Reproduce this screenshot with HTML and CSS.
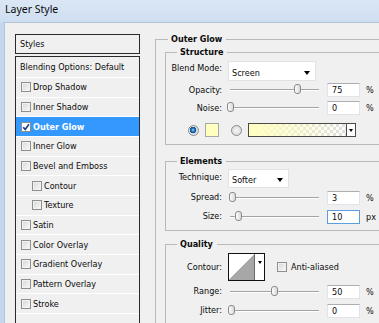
FILE: index.html
```html
<!DOCTYPE html>
<html lang="en">
<head>
    <meta charset="UTF-8">
    <meta name="viewport" content="width=device-width, initial-scale=1.0">
    <title>Layer Style</title>
    <link rel="stylesheet" href="styles.css">
</head>
<body>
    <div class="window">
        <div class="titlebar">Layer Style</div>
        <div class="client">
            <div class="styles-panel">
                <div class="panel-head">Styles</div>
                <ul class="style-list">
                    <li class="blending">Blending Options: Default</li>
                    <li><span class="check"></span>Drop Shadow</li>
                    <li><span class="check"></span>Inner Shadow</li>
                    <li class="selected">
                        <span class="check"><svg viewBox="0 0 8 8" width="8" height="8"><path d="M1.2 4.2 L3.2 6.4 L6.9 1.2"/></svg></span>Outer Glow
                    </li>
                    <li><span class="check"></span>Inner Glow</li>
                    <li><span class="check"></span>Bevel and Emboss</li>
                    <li class="indent"><span class="check"></span>Contour</li>
                    <li class="indent"><span class="check"></span>Texture</li>
                    <li><span class="check"></span>Satin</li>
                    <li><span class="check"></span>Color Overlay</li>
                    <li><span class="check"></span>Gradient Overlay</li>
                    <li><span class="check"></span>Pattern Overlay</li>
                    <li><span class="check"></span>Stroke</li>
                    <li></li>
                </ul>
            </div>

            <div class="options">
                <fieldset class="outer">
                    <legend>Outer Glow</legend>

                    <fieldset class="group structure">
                        <legend>Structure</legend>
                        <div class="row select-row">
                            <label class="lbl">Blend Mode:</label>
                            <div class="select blend"><span>Screen</span><span class="arrow"></span></div>
                        </div>
                        <div class="row slider-row short">
                            <label class="lbl">Opacity:</label>
                            <div class="slider"><span class="thumb" style="left: 75%"></span></div>
                            <div class="num">75</div>
                            <span class="unit">%</span>
                        </div>
                        <div class="row slider-row short">
                            <label class="lbl">Noise:</label>
                            <div class="slider"><span class="thumb" style="left: 0%"></span></div>
                            <div class="num">0</div>
                            <span class="unit">%</span>
                        </div>
                        <div class="row color-row">
                            <span class="radio on"></span>
                            <span class="swatch"></span>
                            <span class="radio"></span>
                            <div class="gradient">
                                <span class="fill"></span>
                                <span class="drop"><span class="arrow"></span></span>
                            </div>
                        </div>
                    </fieldset>

                    <fieldset class="group elements">
                        <legend>Elements</legend>
                        <div class="row select-row">
                            <label class="lbl">Technique:</label>
                            <div class="select technique"><span>Softer</span><span class="arrow"></span></div>
                        </div>
                        <div class="row slider-row">
                            <label class="lbl">Spread:</label>
                            <div class="slider"><span class="thumb" style="left: 2%"></span></div>
                            <div class="num">3</div>
                            <span class="unit">%</span>
                        </div>
                        <div class="row slider-row">
                            <label class="lbl">Size:</label>
                            <div class="slider"><span class="thumb" style="left: 9%"></span></div>
                            <div class="num focus">10</div>
                            <span class="unit">px</span>
                        </div>
                    </fieldset>

                    <fieldset class="group quality">
                        <legend>Quality</legend>
                        <div class="row contour-row">
                            <label class="lbl">Contour:</label>
                            <div class="contour">
                                <span class="curve"></span>
                                <span class="drop"><span class="arrow"></span></span>
                            </div>
                            <span class="check"></span>
                            <span class="check-label">Anti-aliased</span>
                        </div>
                        <div class="row slider-row range">
                            <label class="lbl">Range:</label>
                            <div class="slider"><span class="thumb" style="left: 49%"></span></div>
                            <div class="num">50</div>
                            <span class="unit">%</span>
                        </div>
                        <div class="row slider-row">
                            <label class="lbl">Jitter:</label>
                            <div class="slider"><span class="thumb" style="left: 1%"></span></div>
                            <div class="num">0</div>
                            <span class="unit">%</span>
                        </div>
                    </fieldset>
                </fieldset>
            </div>
        </div>
    </div>
</body>
</html>
```

FILE: styles.css
```css
* {
    box-sizing: border-box;
}

body {
    margin: 0;
    background: #c4d7ef;
    overflow: hidden;
    font-family: "DejaVu Sans Condensed", "DejaVu Sans", sans-serif;
    font-size: 9px;
    color: #0a0a0a;
}

.window {
    width: 100%;
    height: 100vh;
    display: flex;
    flex-direction: column;
    overflow: hidden;
}

.titlebar {
    height: 22px;
    flex: none;
    padding-left: 5px;
    line-height: 18px;
    font-family: "Noto Sans", sans-serif;
    font-size: 10.5px;
    color: #0a0a0a;
    background: linear-gradient(#dbe7f5, #cedef1);
}

.client {
    flex: 1;
    min-height: 0;
    display: flex;
    align-items: stretch;
    margin-left: 4px;
    padding: 11px 0 0 10px;
    overflow: hidden;
    background: #f0f0f0;
    border-top: 1px solid #b3c3d8;
    border-left: 1px solid #b3c3d8;
}

/* left list of styles */
.styles-panel {
    width: 125px;
    flex: none;
    display: flex;
    flex-direction: column;
}

.panel-head {
    height: 20px;
    flex: none;
    padding-left: 4px;
    line-height: 18px;
    border: 1px solid #2a2a2a;
}

.style-list {
    flex: 1;
    list-style: none;
    margin: 2px 0 0;
    padding: 0;
    overflow: hidden;
    border: 1px solid #2a2a2a;
    border-bottom: none;
}

.style-list li {
    height: 19.67px;
    display: flex;
    align-items: center;
    padding-left: 5px;
    border-bottom: 1px solid #ffffff;
}

.style-list li.blending {
    height: 21px;
    padding-left: 4px;
}

.style-list li.indent {
    padding-left: 16px;
}

.style-list li.selected {
    background: #3399ff;
    color: #ffffff;
    font-weight: bold;
}

.check {
    width: 10px;
    height: 10px;
    flex: none;
    margin-right: 2px;
    border: 1px solid #8e8f8f;
    background: linear-gradient(135deg, #d6d6d6, #fbfbfb);
    box-shadow: inset 0 0 0 1px #f2f2f2;
}

.selected .check {
    background: #ffffff;
    box-shadow: none;
}

.check svg {
    display: block;
}

.check path {
    fill: none;
    stroke: #1f3a8a;
    stroke-width: 1.6;
}

/* right options */
.options {
    flex: 1;
    min-width: 0;
    margin-left: 15px;
    display: flex;
    flex-direction: column;
}

fieldset {
    margin: 0;
    padding: 0;
    min-width: 0;
    border: 1px solid #b9b9b9;
    border-right: none;
}

legend {
    padding: 0 4px 0 3px;
    font-weight: bold;
    line-height: 11px;
}

.outer {
    flex: 1;
    padding-left: 9px;
    border-bottom: none;
}

.outer > legend {
    margin-left: 3px;
}

.group > legend {
    margin-left: 11px;
}

.structure {
    margin-top: 2px;
    padding-bottom: 7px;
}

.elements {
    margin-top: 11px;
    padding-bottom: 4px;
}

.quality {
    margin-top: 8px;
    padding-bottom: 20px;
    border-bottom: none;
}

.row {
    display: flex;
    align-items: center;
}

.lbl {
    width: 57px;
    flex: none;
    padding-right: 1px;
    text-align: right;
    line-height: 11px;
}

.select-row {
    align-items: flex-start;
}

.structure .select-row {
    margin-top: 3px;
}

.structure .select-row .lbl {
    margin-top: 2px;
}

.elements .select-row {
    margin-top: 2px;
}

.elements .select-row .lbl {
    margin-top: 3px;
}

.select {
    margin-left: 5px;
    display: flex;
    align-items: center;
    justify-content: space-between;
    padding: 3px 5px 0 3px;
    background: #ffffff;
    border: 1px solid #e2e2e2;
}

.select.blend {
    width: 88px;
    height: 20px;
    padding-top: 4px;
}

.select.technique {
    width: 61px;
    height: 19px;
}

.arrow {
    width: 0;
    height: 0;
    border-left: 3px solid transparent;
    border-right: 3px solid transparent;
    border-top: 4px solid #000000;
}

.slider-row {
    height: 19px;
}

.slider-row.short {
    height: 18px;
}

.structure .slider-row.short:first-of-type {
    margin-top: 1px;
}

.slider-row.range {
    margin-top: 1px;
}

.slider {
    position: relative;
    width: 89px;
    height: 2px;
    margin-left: 7px;
    border-top: 1px solid #a3a3a3;
    border-bottom: 1px solid #ffffff;
}

.thumb {
    position: absolute;
    top: -6px;
    width: 7px;
    height: 10px;
    margin-left: -3px;
    border: 1px solid #8a8a8a;
    border-radius: 3px;
    background: linear-gradient(90deg, #fdfdfd, #d9d9d9);
}

.num {
    width: 33px;
    height: 14px;
    margin-left: 8px;
    padding-left: 4px;
    line-height: 12px;
    background: #ffffff;
    border: 1px solid #e2e3ea;
    border-top-color: #abadb3;
}

.num.focus {
    border-color: #5c9fdf;
}

.unit {
    margin-left: 6px;
}

.color-row {
    margin-top: 6px;
    height: 14px;
    padding-left: 22px;
}

.radio {
    width: 11px;
    height: 11px;
    flex: none;
    border-radius: 50%;
    border: 1px solid #8b8b8b;
    background: radial-gradient(circle, #f4f4f4 0, #d4d4d4 100%);
}

.radio.on {
    background: radial-gradient(circle at 45% 45%, #9ad6ff 0, #2a83c9 1.5px, #0f4d86 3px, #e8e8e8 3.6px, #d0d0d0 100%);
}

.swatch {
    width: 14px;
    height: 14px;
    margin-left: 6px;
    background: #ffffc0;
    border: 1px solid #a8a8a8;
}

.color-row .swatch + .radio {
    margin-left: 12px;
}

.color-row .radio + .gradient {
    margin-left: 6px;
}

.gradient {
    width: 108px;
    height: 14px;
    display: flex;
    border: 1px solid #4a4a4a;
}

.gradient .fill {
    flex: 1;
    background:
        linear-gradient(90deg, #ffffc0, rgba(255, 255, 192, 0)),
        repeating-conic-gradient(#dedede 0 25%, #ffffff 0 50%) 0 0 / 6px 6px;
}

.drop {
    width: 9px;
    display: flex;
    justify-content: center;
    background: #ffffff;
    border-left: 1px solid #4a4a4a;
}

.gradient .drop {
    align-items: center;
}

.gradient .drop .arrow,
.contour .drop .arrow {
    border-left-width: 2.5px;
    border-right-width: 2.5px;
    border-top-width: 3px;
}

.contour-row {
    margin-top: 3px;
}

.contour {
    width: 37px;
    height: 28px;
    margin-left: 5px;
    display: flex;
    border: 1px solid #111111;
}

.contour .curve {
    flex: 1;
    background: linear-gradient(to top left, #a7a7a7 50%, #ffffff 50%);
}

.contour .drop {
    width: 10px;
    padding-top: 7px;
    border-left-color: #6a6a6a;
}

.contour-row .check {
    margin-left: 12px;
    margin-right: 4px;
}
```
